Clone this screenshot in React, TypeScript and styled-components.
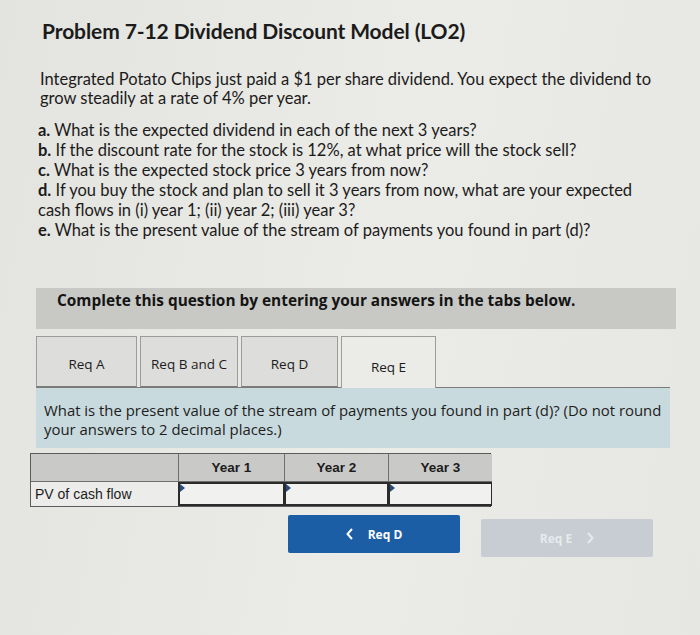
import React, { FC } from "react";
import styled, { createGlobalStyle } from "styled-components";

const GlobalStyle = createGlobalStyle`
  html, body {
    margin: 0;
    padding: 0;
    background: #e7e7e3;
  }
  body {
    width: 700px;
    height: 635px;
    overflow: hidden;
  }
`;

const Page = styled.div`
  width: 700px;
  height: 635px;
  box-sizing: border-box;
  padding: 17px 24px 0 36px;
  color: #1b1b1b;
  background: linear-gradient(100deg, #e3e3df 0%, #ebebe7 55%, #e6e6e2 100%);
`;

const Title = styled.h1`
  margin: 0 0 0 6px;
  font-family: Lato, "Open Sans", sans-serif;
  font-weight: 700;
  font-size: 21px;
  line-height: 28px;
  letter-spacing: -0.1px;
`;

const Intro = styled.p`
  margin: 25px 0 0 4px;
  font-family: Lato, "Open Sans", sans-serif;
  font-size: 16.5px;
  line-height: 19px;
  width: 636px;
`;

const Parts = styled.div`
  margin: 12px 0 0 2px;
  font-family: Lato, "Open Sans", sans-serif;
  font-size: 16.5px;
  line-height: 20px;
  width: 612px;
`;

const Part = styled.div``;

const Letter = styled.b`
  font-weight: 700;
`;

const Instruction = styled.div`
  margin-top: 48px;
  width: 640px;
  height: 41px;
  box-sizing: border-box;
  padding: 3px 21px 0;
  background: #c8c9c5;
  font-family: "Open Sans", sans-serif;
  font-weight: 700;
  font-size: 15.4px;
  line-height: 20px;
  color: #141414;
`;

const TabRow = styled.div`
  display: flex;
  gap: 3px;
  margin-top: 7px;
  width: 634px;
  height: 52px;
  box-sizing: border-box;
  border-bottom: 1px solid #7b7c7a;
`;

const Tab = styled.div<{ $active?: boolean; $width: number }>`
  width: ${(p) => p.$width}px;
  height: ${(p) => (p.$active ? 52 : 51)}px;
  box-sizing: border-box;
  display: flex;
  align-items: center;
  justify-content: center;
  padding-top: ${(p) => (p.$active ? 8 : 4)}px;
  margin-bottom: ${(p) => (p.$active ? -1 : 0)}px;
  background: ${(p) => (p.$active ? "#ebebe7" : "#dddddb")};
  border: 1px solid #9c9d9b;
  border-bottom: ${(p) => (p.$active ? "none" : "1px solid #7b7c7a")};
  font-family: "Open Sans", sans-serif;
  font-size: 13.5px;
  color: #1c1c1c;
`;

const Panel = styled.div`
  width: 634px;
  height: 60px;
  box-sizing: border-box;
  padding: 13px 4px 0 8px;
  background: #c8dadd;
  font-family: "Open Sans", sans-serif;
  font-size: 14.9px;
  line-height: 19px;
  color: #1d1d1d;
`;

const Table = styled.div`
  margin: 5px 0 0 -6px;
  display: grid;
  grid-template-columns: 147px 106px 104px 104px;
  width: 461px;
  border: 1px solid #5c5c5c;
  border-right: 2px solid #333;
  box-sizing: border-box;
  background: #ececea;
`;

const HeadCell = styled.div<{ $first?: boolean }>`
  height: 27px;
  display: flex;
  align-items: center;
  justify-content: center;
  background: #c9c9c7;
  border-left: ${(p) => (p.$first ? "none" : "1px solid #6f6f6f")};
  border-bottom: 1px solid #6f6f6f;
  font-family: "Liberation Sans", Arial, sans-serif;
  font-weight: 700;
  font-size: 13.5px;
  color: #1c1c1c;
`;

const Label = styled.div`
  height: 24px;
  display: flex;
  align-items: center;
  padding-left: 4px;
  font-family: "Liberation Sans", Arial, sans-serif;
  font-size: 14px;
  color: #1c1c1c;
`;

const InputCell = styled.div`
  position: relative;
  height: 24px;
  box-sizing: border-box;
  border: 2px solid #2b2b2b;
  border-right-width: 1px;
  background: #f1f1ef;
`;

const Marker = styled.span`
  position: absolute;
  left: 0;
  top: 0;
  width: 0;
  height: 0;
  border-top: 4px solid transparent;
  border-bottom: 4px solid transparent;
  border-left: 5px solid #2c4a7a;
`;

const NavRow = styled.div`
  display: flex;
  gap: 21px;
  margin: 8px 0 0 252px;
`;

const NavButton = styled.button<{ $disabled?: boolean }>`
  width: 172px;
  height: 38px;
  display: flex;
  align-items: center;
  justify-content: center;
  gap: 14px;
  border: none;
  border-radius: 2px;
  margin-top: ${(p) => (p.$disabled ? 4 : 0)}px;
  background: ${(p) => (p.$disabled ? "#c7cdd2" : "#1c5ea6")};
  color: ${(p) => (p.$disabled ? "#e6eaed" : "#ffffff")};
  font-family: "Open Sans", sans-serif;
  font-weight: 700;
  font-size: 12px;
  cursor: ${(p) => (p.$disabled ? "default" : "pointer")};
`;

const Chevron: FC<{ dir: "left" | "right" }> = ({ dir }) => (
  <svg width="8" height="12" viewBox="0 0 8 12">
    <path
      d={dir === "left" ? "M6 1 L1.5 6 L6 11" : "M2 1 L6.5 6 L2 11"}
      fill="none"
      stroke="currentColor"
      strokeWidth="2"
    />
  </svg>
);

const tabs = [
  { label: "Req A", width: 101 },
  { label: "Req B and C", width: 98 },
  { label: "Req D", width: 97 },
  { label: "Req E", width: 95 },
];
const years = ["Year 1", "Year 2", "Year 3"];

export default function App() {
  return (
    <>
      <GlobalStyle />
      <Page>
        <Title>Problem 7-12 Dividend Discount Model (LO2)</Title>
        <Intro>
          Integrated Potato Chips just paid a $1 per share dividend. You expect the dividend to
          grow steadily at a rate of 4% per year.
        </Intro>
        <Parts>
          <Part>
            <Letter>a.</Letter> What is the expected dividend in each of the next 3 years?
          </Part>
          <Part>
            <Letter>b.</Letter> If the discount rate for the stock is 12%, at what price will the stock sell?
          </Part>
          <Part>
            <Letter>c.</Letter> What is the expected stock price 3 years from now?
          </Part>
          <Part>
            <Letter>d.</Letter> If you buy the stock and plan to sell it 3 years from now, what are your expected
            cash flows in (i) year 1; (ii) year 2; (iii) year 3?
          </Part>
          <Part>
            <Letter>e.</Letter> What is the present value of the stream of payments you found in part (d)?
          </Part>
        </Parts>

        <Instruction>Complete this question by entering your answers in the tabs below.</Instruction>

        <TabRow>
          {tabs.map((t) => (
            <Tab key={t.label} $width={t.width} $active={t.label === "Req E"}>
              {t.label}
            </Tab>
          ))}
        </TabRow>

        <Panel>
          What is the present value of the stream of payments you found in part (d)? (Do not round
          your answers to 2 decimal places.)
        </Panel>

        <Table>
          <HeadCell $first />
          {years.map((y) => (
            <HeadCell key={y}>{y}</HeadCell>
          ))}
          <Label>PV of cash flow</Label>
          {years.map((y) => (
            <InputCell key={y}>
              <Marker />
            </InputCell>
          ))}
        </Table>

        <NavRow>
          <NavButton>
            <Chevron dir="left" />
            Req D
          </NavButton>
          <NavButton $disabled>
            Req E
            <Chevron dir="right" />
          </NavButton>
        </NavRow>
      </Page>
    </>
  );
}
